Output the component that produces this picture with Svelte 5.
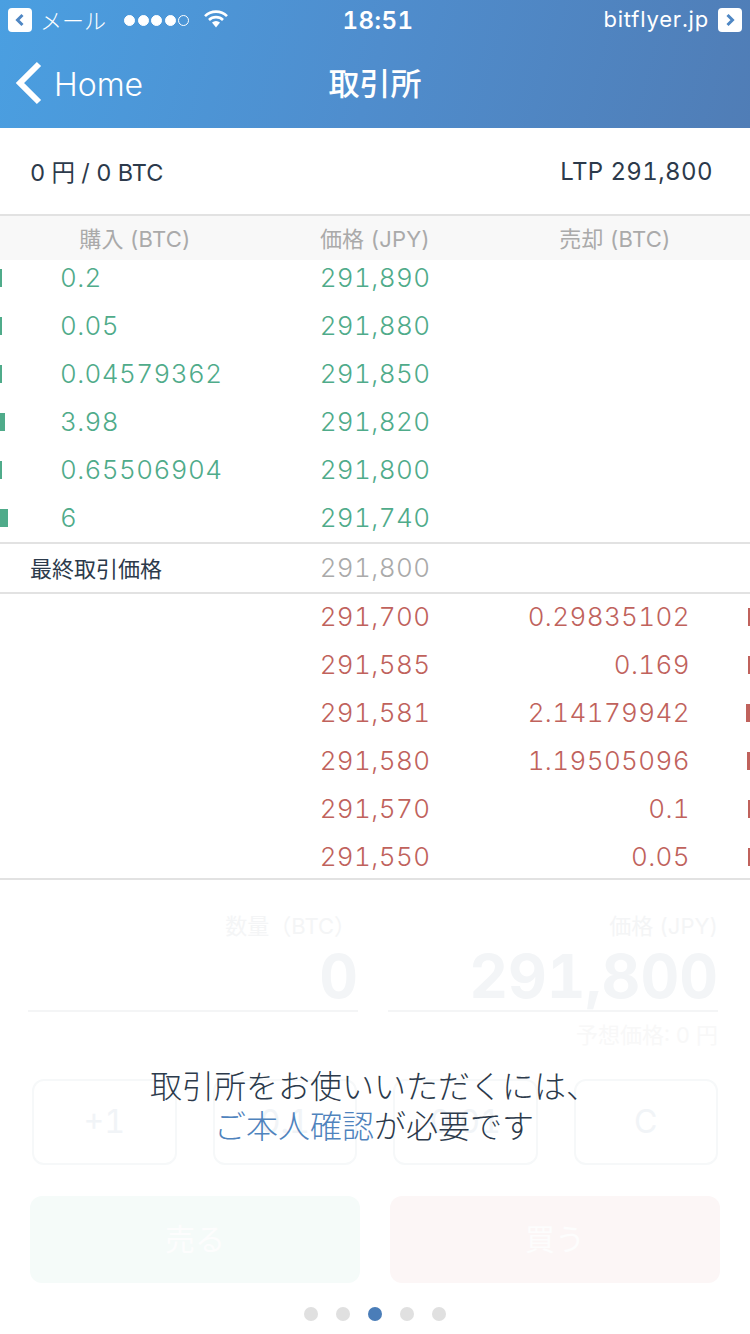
<script>
  const buys = [
    { qty: '0.2', price: '291,890', bar: 2 },
    { qty: '0.05', price: '291,880', bar: 2 },
    { qty: '0.04579362', price: '291,850', bar: 2 },
    { qty: '3.98', price: '291,820', bar: 5 },
    { qty: '0.65506904', price: '291,800', bar: 2 },
    { qty: '6', price: '291,740', bar: 8 }
  ];
  const asks = [
    { qty: '0.29835102', price: '291,700', bar: 2 },
    { qty: '0.169', price: '291,585', bar: 2 },
    { qty: '2.14179942', price: '291,581', bar: 4 },
    { qty: '1.19505096', price: '291,580', bar: 3 },
    { qty: '0.1', price: '291,570', bar: 2 },
    { qty: '0.05', price: '291,550', bar: 2 }
  ];
  const keys = ['+1', '0.1', '0.01', 'C'];
  const pages = [0, 1, 2, 3, 4];
</script>

<div class="screen">
  <!-- blue header -->
  <header class="top">
    <div class="status">
      <div class="status-left">
        <span class="chip">
          <svg viewBox="0 0 24 24" width="24" height="24"><path d="M14.5 7 L9.5 12 L14.5 17" /></svg>
        </span>
        <span class="carrier">メール</span>
        <span class="signal">
          {#each [1, 2, 3, 4] as d (d)}<i></i>{/each}<i class="empty"></i>
        </span>
        <svg class="wifi" viewBox="0 0 24 18" width="24" height="18">
          <path d="M1 6.2 A15.5 15.5 0 0 1 23 6.2" />
          <path d="M5 10 A10 10 0 0 1 19 10" />
          <path class="wedge" d="M8 12.6 A6 6 0 0 1 16 12.6 L12 17.5 Z" />
        </svg>
      </div>
      <div class="clock">18:51</div>
      <div class="status-right">
        <span>bitflyer.jp</span>
        <span class="chip">
          <svg viewBox="0 0 24 24" width="24" height="24"><path d="M9.5 7 L14.5 12 L9.5 17" /></svg>
        </span>
      </div>
    </div>
    <nav class="nav">
      <div class="back">
        <svg viewBox="0 0 28 44" width="28" height="44"><path d="M24 3 L5 22 L24 41" /></svg>
        <span>Home</span>
      </div>
      <h1>取引所</h1>
    </nav>
  </header>

  <div class="summary">
    <span>0 円 / 0 BTC</span>
    <span class="ltp">LTP 291,800</span>
  </div>

  <!-- order book -->
  <div class="book-head">
    <span>購入 (BTC)</span>
    <span>価格 (JPY)</span>
    <span>売却 (BTC)</span>
  </div>
  <div class="rows buys">
    {#each buys as row (row.price)}
      <div class="row green">
        <i class="bar" style="width: {row.bar}px"></i>
        <span class="left">{row.qty}</span>
        <span class="price">{row.price}</span>
        <span></span>
      </div>
    {/each}
  </div>
  <div class="last">
    <span class="last-label">最終取引価格</span>
    <span class="price">291,800</span>
    <span></span>
  </div>
  <div class="rows asks">
    {#each asks as row (row.price)}
      <div class="row red">
        <span></span>
        <span class="price">{row.price}</span>
        <span class="right">{row.qty}</span>
        <i class="bar bar-right" style="width: {row.bar}px"></i>
      </div>
    {/each}
  </div>

  <!-- faded order form -->
  <section class="form">
    <div class="fields">
      <div class="field">
        <div class="label qty-label">数量（BTC）</div>
        <div class="value">0</div>
      </div>
      <div class="field">
        <div class="label">価格 (JPY)</div>
        <div class="value">291,800</div>
        <div class="hint">予想価格: 0 円</div>
      </div>
    </div>
    <div class="keys">
      {#each keys as k (k)}
        <div class="key">{k}</div>
      {/each}
    </div>
    <div class="actions">
      <div class="action sell">売る</div>
      <div class="action buy">買う</div>
    </div>
    <div class="dots">
      {#each pages as p (p)}
        <i class:on={p === 2}></i>
      {/each}
    </div>

    <p class="notice">取引所をお使いいただくには、<br /><span>ご本人確認</span>が必要です</p>
  </section>
</div>

<style>
  :global(body) {
    background: #fff;
  }

  .screen {
    width: 750px;
    height: 1334px;
    overflow: hidden;
    background: #fff;
    color: #2c3a4b;
    font-family: Inter, "Noto Sans CJK JP", sans-serif;
    font-variant-numeric: tabular-nums;
  }

  .top {
    height: 128px;
    background: linear-gradient(105deg, #4a9fe1 0%, #4f8dcd 50%, #507db6 100%);
    color: #fff;
  }

  .status {
    height: 40px;
    display: grid;
    grid-template-columns: 1fr auto 1fr;
    align-items: center;
    padding: 0 8px;
    font-size: 22px;
  }

  .status-left,
  .status-right {
    display: flex;
    align-items: center;
  }

  .status-right {
    justify-content: flex-end;
    gap: 9px;
    letter-spacing: 0.8px;
  }

  .status-right span:first-child {
    margin-top: -2px;
  }

  .chip {
    width: 24px;
    height: 24px;
    border-radius: 4px;
    background: #fff;
    display: block;
  }

  .chip svg {
    display: block;
  }

  .chip path {
    fill: none;
    stroke: #4f87c4;
    stroke-width: 3;
  }

  .carrier {
    margin: -3px 0 0 8px;
    font-weight: 300;
  }

  .signal {
    margin-left: 18px;
    display: flex;
    gap: 2.5px;
  }

  .signal i {
    width: 11px;
    height: 11px;
    border-radius: 50%;
    background: #fff;
    border: 1px solid #fff;
    box-sizing: border-box;
  }

  .signal .empty {
    background: transparent;
  }

  .wifi {
    margin-left: 15px;
    margin-top: -3px;
  }

  .wifi path {
    fill: none;
    stroke: #fff;
    stroke-width: 2.6;
  }

  .wifi .wedge {
    fill: #fff;
    stroke: none;
  }

  .clock {
    font-size: 24px;
    font-weight: 600;
    letter-spacing: 0.5px;
    margin-left: 6px;
  }

  .nav {
    height: 88px;
    display: grid;
    grid-template-columns: 1fr auto 1fr;
    align-items: center;
    padding-left: 15px;
  }

  .back {
    display: flex;
    align-items: center;
    gap: 11px;
    font-size: 32px;
    font-weight: 300;
    margin-top: -2px;
  }

  .back svg {
    display: block;
  }

  .back span {
    margin-top: 2px;
  }

  .back path {
    fill: none;
    stroke: #fff;
    stroke-width: 6;
  }

  .nav h1 {
    margin: -6px 0 0 -15px;
    font-size: 31px;
    font-weight: 500;
  }

  .summary {
    height: 86px;
    display: flex;
    justify-content: space-between;
    align-items: center;
    padding: 0 37px 0 30px;
    font-size: 23.5px;
    border-bottom: 2px solid #e2e2e2;
  }

  .ltp {
    font-size: 24px;
    letter-spacing: 0.4px;
    margin-top: 1px;
  }

  .book-head,
  .row,
  .last {
    display: grid;
    grid-template-columns: 270px 210px 270px;
    align-items: center;
    position: relative;
  }

  .book-head {
    height: 44px;
    padding-bottom: 3px;
    box-sizing: border-box;
    background: #f8f8f8;
    color: #aaa;
    font-size: 22px;
    letter-spacing: 0.2px;
    text-align: center;
    z-index: 1;
  }

  .rows {
    overflow: hidden;
  }

  .buys {
    height: 282px;
  }

  .asks {
    height: 284px;
    border-bottom: 2px solid #e2e2e2;
  }

  .buys .row:first-child {
    margin-top: -6px;
  }

  .asks .row:first-child {
    margin-top: -1px;
  }

  .row {
    height: 48px;
    font-size: 26px;
    letter-spacing: 0.4px;
    font-weight: 350;
  }

  .row span {
    margin-top: -2px;
  }

  .green {
    color: #4fab8a;
  }

  .red {
    color: #c0625c;
  }

  .price {
    text-align: center;
  }

  .left {
    padding-left: 60px;
  }

  .right {
    text-align: right;
    padding-right: 60px;
  }

  .bar {
    position: absolute;
    left: 0;
    top: 15px;
    height: 18px;
    background: currentColor;
  }

  .bar-right {
    left: auto;
    right: 0;
  }

  .last {
    height: 48px;
    padding-bottom: 2px;
    box-sizing: content-box;
    height: 46px;
    border-top: 2px solid #e2e2e2;
    border-bottom: 2px solid #e2e2e2;
    font-size: 26px;
    letter-spacing: 0.4px;
    font-weight: 350;
    color: #aaa;
  }

  .last-label {
    padding-left: 30px;
    font-size: 22px;
    letter-spacing: 0;
    font-weight: 400;
    color: #2c3a4b;
    margin-top: -1px;
  }

  .form {
    position: relative;
    height: 456px;
    padding-top: 31px;
    box-sizing: border-box;
  }

  .fields {
    display: grid;
    grid-template-columns: 330px 330px;
    gap: 30px;
    padding-left: 28px;
    height: 138px;
  }

  .label {
    height: 30px;
    line-height: 30px;
    font-size: 22px;
    color: #f4f5f6;
    text-align: right;
  }

  .qty-label {
    padding-right: 2px;
  }

  .value {
    height: 69px;
    line-height: 70px;
    font-size: 60px;
    font-weight: 700;
    color: #f3f5f7;
    text-align: right;
    border-bottom: 2px solid #f4f5f6;
  }

  .hint {
    margin-top: 5px;
    font-size: 22px;
    color: #f8f8f8;
    text-align: right;
  }

  .keys {
    display: grid;
    grid-template-columns: repeat(4, 1fr);
    gap: 36px;
    margin: 30px 32px 0;
  }

  .key {
    height: 82px;
    line-height: 82px;
    border: 2px solid #f6f8f9;
    border-radius: 12px;
    font-size: 32px;
    color: #f1f4f7;
    text-align: center;
  }

  .actions {
    display: grid;
    grid-template-columns: 330px 330px;
    gap: 30px;
    margin: 31px 0 0 30px;
  }

  .action {
    height: 87px;
    line-height: 87px;
    border-radius: 12px;
    font-size: 30px;
    color: #fdfdfd;
    text-align: center;
  }

  .sell {
    background: #f5fbf9;
  }

  .buy {
    background: #fcf6f6;
  }

  .dots {
    display: flex;
    justify-content: center;
    gap: 18px;
    margin-top: 24px;
  }

  .dots i {
    width: 14px;
    height: 14px;
    border-radius: 50%;
    background: #e0e0e0;
  }

  .dots .on {
    background: #4a7db8;
  }

  .notice {
    position: absolute;
    left: -2px;
    right: 0;
    top: 187px;
    margin: 0;
    font-size: 32px;
    line-height: 40px;
    font-weight: 300;
    text-align: center;
    color: #2c3a4b;
  }

  .notice span {
    color: #4f83bd;
  }
</style>
